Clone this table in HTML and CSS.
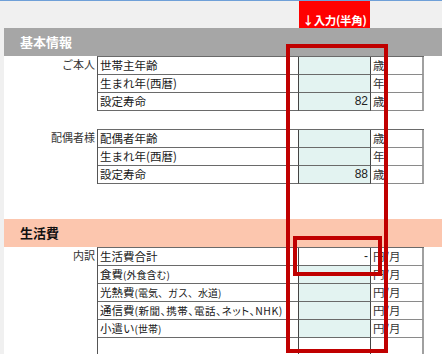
FILE: index.html
```html
<!DOCTYPE html>
<html lang="ja">
<head>
<meta charset="utf-8">
<link rel="stylesheet" href="styles.css">
</head>
<body>
<div class="topbar"><div class="input-head">↓入力(半角)</div></div>
<div class="sheet">
  <div class="band band-gray">基本情報</div>
  <div class="group first">
    <div class="who">ご本人</div>
    <div class="grid">
      <div class="c lbl">世帯主年齢</div><div class="c inp"></div><div class="c unit">歳</div>
      <div class="c lbl">生まれ年(西暦)</div><div class="c inp"></div><div class="c unit">年</div>
      <div class="c lbl">設定寿命</div><div class="c inp">82</div><div class="c unit">歳</div>
    </div>
  </div>
  <div class="group second">
    <div class="who">配偶者様</div>
    <div class="grid">
      <div class="c lbl">配偶者年齢</div><div class="c inp"></div><div class="c unit">歳</div>
      <div class="c lbl">生まれ年(西暦)</div><div class="c inp"></div><div class="c unit">年</div>
      <div class="c lbl">設定寿命</div><div class="c inp">88</div><div class="c unit">歳</div>
    </div>
  </div>
  <div class="band band-salmon">生活費</div>
  <div class="group">
    <div class="who">内訳</div>
    <div class="grid">
      <div class="c lbl">生活費合計</div><div class="c inp plain">-</div><div class="c unit">円/月</div>
      <div class="c lbl">食費<small>(外食含む)</small></div><div class="c inp"></div><div class="c unit">円/月</div>
      <div class="c lbl">光熱費<small>(電気、ガス、水道)</small></div><div class="c inp"></div><div class="c unit">円/月</div>
      <div class="c lbl">通信費<small class="tight">(新聞、携帯、電話、ネット、NHK)</small></div><div class="c inp"></div><div class="c unit">円/月</div>
      <div class="c lbl">小遣い<small>(世帯)</small></div><div class="c inp"></div><div class="c unit">円/月</div>
      <div class="c lbl last"></div><div class="c inp plain last"></div><div class="c unit last"></div>
    </div>
  </div>
</div>
<div class="mark mark-outer"></div>
<div class="mark mark-inner"></div>
</body>
</html>
```
FILE: styles.css
```css
html, body {
  margin: 0;
  padding: 0;
  height: 100%;
  overflow: hidden;
}
body {
  background: #f0f0f0;
  font-family: "Noto Sans CJK JP", "Liberation Sans", sans-serif;
  font-size: 11.5px;
  color: #222;
  position: relative;
  display: flex;
  flex-direction: column;
}
.topbar {
  height: 27px;
  flex: none;
  border-top: 1px solid #6fa0d8;
  display: flex;
}
.input-head {
  margin-left: 299px;
  width: 71px;
  background: #ff0000;
  color: #fff;
  font-weight: bold;
  font-size: 11.5px;
  text-align: center;
  line-height: 16px;
  padding-top: 11px;
  box-sizing: border-box;
  white-space: nowrap;
  letter-spacing: -0.3px;
}
.sheet {
  margin-left: 4px;
  background: #fff;
  flex: 1;
  overflow: hidden;
}
.band {
  height: 28px;
  line-height: 28px;
  padding-left: 16px;
  font-weight: bold;
  font-size: 13px;
}
.band-gray {
  background: #a6a6a6;
  color: #fff;
}
.band-salmon {
  background: #fcc6ae;
  color: #111;
}
.group {
  display: flex;
}
.group.first { margin-bottom: 18px; }
.group.second { margin-bottom: 35px; }
.who {
  width: 93px;
  box-sizing: border-box;
  padding-right: 2px;
  text-align: right;
  line-height: 17px;
  font-size: 11px;
  color: #333;
}
.grid {
  display: grid;
  grid-template-columns: 201px 72px 53px;
  border-top: 1px solid #6a6a6a;
  border-left: 1px solid #555;
}
.c {
  height: 18px;
  box-sizing: border-box;
  border-bottom: 1px solid #6a6a6a;
  border-right: 1px solid #444;
  line-height: 17px;
  white-space: nowrap;
}
.c.last {
  height: 16px;
  border-bottom: none;
}
.lbl {
  padding-left: 2px;
  color: #1a1a1a;
}
.lbl small {
  font-size: 10px;
}
.lbl small.tight {
  font-size: 10.5px;
  font-feature-settings: "palt";
  letter-spacing: 0.5px;
}
.inp {
  background: #e3f3f1;
  text-align: right;
  padding-right: 2px;
  font-family: "Liberation Sans", sans-serif;
  font-size: 12px;
  color: #222;
}
.inp.plain {
  background: #fff;
}
.unit {
  border-right: 2px solid #a0a0a0;
  border-bottom-color: #8a8a8a;
  padding-left: 2px;
  color: #333;
  overflow: hidden;
}
.mark {
  position: absolute;
  border: 4px solid #c00000;
  box-sizing: border-box;
}
.mark-outer {
  left: 286px;
  top: 44px;
  width: 102px;
  height: 309px;
}
.mark-inner {
  left: 293px;
  top: 236px;
  width: 89px;
  height: 40px;
}
```
